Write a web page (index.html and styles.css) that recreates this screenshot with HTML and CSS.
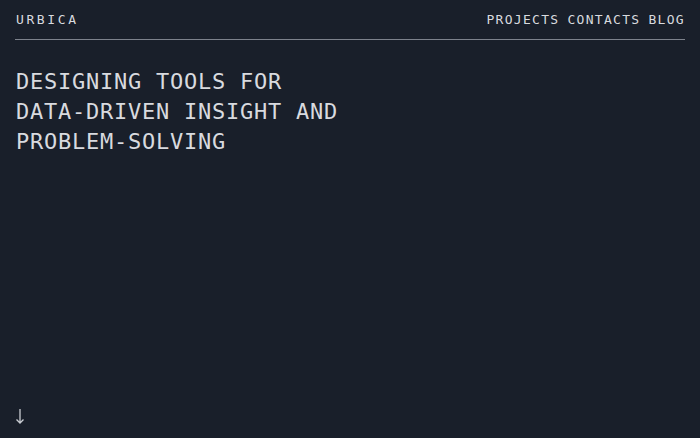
FILE: index.html
```html
<!DOCTYPE html>
<html lang="en">
<head>
    <meta charset="UTF-8">
    <meta name="viewport" content="width=device-width, initial-scale=1.0">
    <title>Urbica</title>
    <link rel="stylesheet" href="styles.css">
</head>
<body>
    <div class="page">
        <header class="header">
            <a href="#" class="logo">URBICA</a>
            <nav class="nav">
                <a href="#">PROJECTS</a>
                <a href="#">CONTACTS</a>
                <a href="#">BLOG</a>
            </nav>
        </header>

        <main class="hero">
            <h1>DESIGNING TOOLS FOR<br>DATA-DRIVEN INSIGHT AND<br>PROBLEM-SOLVING</h1>
        </main>

        <div class="scroll-down">
            <svg width="10" height="16" viewBox="0 0 10 16">
                <path d="M5 1 V15 M1.5 11.5 L5 15 L8.5 11.5" fill="none" stroke="#c9ccd2" stroke-width="1.3"/>
            </svg>
        </div>
    </div>
</body>
</html>
```

FILE: styles.css
```css
:root {
    --background-color: #191f2a;
    --text-color: #d8dadf;
    --line-color: #7d828c;
}

* {
    margin: 0;
    padding: 0;
    box-sizing: border-box;
    font-family: 'DejaVu Sans Mono', 'Liberation Mono', monospace;
}

body {
    background-color: var(--background-color);
    color: var(--text-color);
    height: 100vh;
    overflow: hidden;
}

.page {
    display: flex;
    flex-direction: column;
    height: 100%;
    padding: 0 15px;
}

.header {
    display: flex;
    justify-content: space-between;
    align-items: center;
    height: 40px;
    border-bottom: 1px solid var(--line-color);
}

.header a {
    color: var(--text-color);
    text-decoration: none;
    font-size: 13px;
}

.logo {
    letter-spacing: 2.6px;
    padding-left: 1px;
}

.nav {
    display: flex;
    gap: 8px;
}

.nav a {
    letter-spacing: 1.3px;
}

.hero {
    flex: 1;
    padding-top: 27px;
    padding-left: 1px;
}

.hero h1 {
    font-size: 22px;
    font-weight: normal;
    line-height: 30px;
    letter-spacing: 0.75px;
}

.scroll-down {
    height: 38px;
    padding-top: 8px;
}
```
